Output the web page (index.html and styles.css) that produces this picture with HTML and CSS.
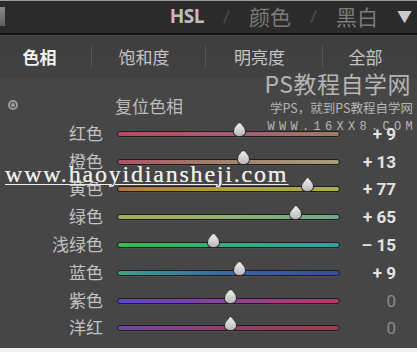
FILE: index.html
```html
<!DOCTYPE html>
<html>
	<head>
		<meta charset="UTF-8">
		<title>HSL</title>
		<link rel="stylesheet" href="styles.css">
	</head>
	<body>
		<div class="panel">
			<!--顶部标题栏-->
			<div class="topbar">
				<span class="grip"></span>
				<div class="modes">
					<span class="mode on">HSL</span>
					<span class="slash">/</span>
					<span class="mode">颜色</span>
					<span class="slash">/</span>
					<span class="mode">黑白</span>
					<span class="arrow">▼</span>
				</div>
			</div>
			<!--选项卡-->
			<div class="tabs">
				<div class="tab active">色相</div>
				<div class="tab">饱和度</div>
				<div class="tab">明亮度</div>
				<div class="tab">全部</div>
			</div>
			<div class="content">
				<div class="mark">
					<div class="mark-title">PS教程自学网</div>
					<div class="mark-sub">学PS，就到PS教程自学网</div>
					<div class="mark-url">WWW.16XX8.COM</div>
				</div>
				<div class="reset">
					<span class="target"></span>
					<span class="reset-text">复位色相</span>
				</div>
				<div class="rows">
					<div class="label">红色</div>
					<div class="track red"><span class="thumb" style="left:54.7%"></span></div>
					<div class="value">+ 9</div>

					<div class="label">橙色</div>
					<div class="track orange"><span class="thumb" style="left:56.5%"></span></div>
					<div class="value">+ 13</div>

					<div class="label">黄色</div>
					<div class="track yellow"><span class="thumb" style="left:85.6%"></span></div>
					<div class="value">+ 77</div>

					<div class="label">绿色</div>
					<div class="track green"><span class="thumb" style="left:80.3%"></span></div>
					<div class="value">+ 65</div>

					<div class="label">浅绿色</div>
					<div class="track aqua"><span class="thumb" style="left:43%"></span></div>
					<div class="value">– 15</div>

					<div class="label">蓝色</div>
					<div class="track blue"><span class="thumb" style="left:54.7%"></span></div>
					<div class="value">+ 9</div>

					<div class="label">紫色</div>
					<div class="track purple"><span class="thumb" style="left:50.7%"></span></div>
					<div class="value zero">0</div>

					<div class="label">洋红</div>
					<div class="track magenta"><span class="thumb" style="left:50.7%"></span></div>
					<div class="value zero">0</div>
				</div>
			</div>
			<div class="site">www.haoyidiansheji.com</div>
		</div>
	</body>
</html>
```

FILE: styles.css
```css
*{
	margin: 0px;
	padding: 0px;
	box-sizing: border-box;
}
html,body{
	background: #f1f1f1;
}
body{
	width: 417px;
	height: 352px;
	overflow: hidden;
	font-family: "Noto Sans CJK SC", "Noto Sans", sans-serif;
}
.panel{
	position: relative;
	width: 417px;
	height: 348px;
	background: #464646;
}
/*标题栏*/
.topbar{
	height: 35px;
	background: #2b2b2b;
	border-top: 1px solid #9a9a9a;
	border-bottom: 2px solid #141414;
	display: flex;
	align-items: center;
	justify-content: space-between;
}
.grip{
	width: 5px;
	height: 19px;
	margin-top: -2px;
	background: linear-gradient(#8a8a8a, #5e5e5e);
}
.modes{
	display: flex;
	align-items: center;
	gap: 19px;
	padding-right: 5px;
	margin-top: -3px;
	font-size: 21px;
	color: #7c7c7c;
}
.mode.on{
	color: #bdbdbd;
	font-family: "Open Sans", sans-serif;
	font-weight: bold;
	font-size: 19px;
	letter-spacing: -0.5px;
}
.slash{
	color: #4f4f4f;
	font-family: "Open Sans", sans-serif;
	font-size: 19px;
}
.arrow{
	color: #c9c9c9;
	font-size: 15px;
}
/*选项卡*/
.tabs{
	height: 43px;
	display: grid;
	grid-template-columns: 91px 114px 117px 1fr;
	align-items: center;
	background: linear-gradient(#3e3e3e, #424242);
	border-top: 1px solid #4a4a4a;
}
.tab{
	text-align: center;
	padding-right: 9px;
	font-size: 17px;
	line-height: 22px;
	color: #c4c4c4;
	border-left: 1px solid #555555;
}
.tab.active{
	border-left: none;
	font-weight: bold;
	font-size: 17px;
	color: #f2f2f2;
	padding-right: 12px;
}
/*内容*/
.content{
	position: relative;
	padding-top: 15px;
}
.mark{
	position: absolute;
	right: 4px;
	top: -6px;
	text-align: right;
	color: rgba(225,225,225,0.72);
	line-height: 1;
}
.mark-title{
	font-size: 23px;
	letter-spacing: 0.5px;
	margin-right: 2px;
}
.mark-sub{
	margin-top: 7px;
	font-size: 12.5px;
}
.mark-url{
	margin-top: 6px;
	font-family: "Liberation Mono", monospace;
	font-size: 12px;
	letter-spacing: 4.3px;
	margin-right: -4px;
}
.reset{
	height: 24px;
	display: flex;
	align-items: center;
	padding-left: 8px;
}
.target{
	width: 10px;
	height: 10px;
	border: 2px solid #9c9c9c;
	border-radius: 50%;
	position: relative;
}
.target::after{
	content: "";
	position: absolute;
	left: 1px;
	top: 1px;
	width: 4px;
	height: 4px;
	border-radius: 50%;
	background: #9c9c9c;
}
.reset-text{
	margin-left: 97px;
	font-size: 17px;
	color: #bcbcbc;
}
.rows{
	margin-top: 3px;
	display: grid;
	grid-template-columns: 103px 223px 42px;
	grid-auto-rows: 27.8px;
	column-gap: 14px;
	align-items: center;
}
.label{
	text-align: right;
	font-size: 17px;
	color: #c2c2c2;
	margin-top: -3px;
}
.value{
	text-align: right;
	font-family: Roboto, sans-serif;
	font-weight: bold;
	font-size: 17px;
	color: #e2e2e2;
}
.value.zero{
	color: #8c8c8c;
	font-weight: normal;
}
.track{
	position: relative;
	height: 6px;
	border-radius: 3px;
	border: 1px solid #1d1d1d;
	box-shadow: 0 1px 0 rgba(255,255,255,0.06);
}
.track.red{ background: linear-gradient(to right, #c2465f, #a56070 60%, #9c7c62); }
.track.orange{ background: linear-gradient(to right, #b24f66, #a47c6a 40%, #a6a078); }
.track.yellow{ background: linear-gradient(to right, #b5733e, #b0a040 50%, #a8ae52); }
.track.green{ background: linear-gradient(to right, #a7aa58, #8fb070 50%, #6fa88a); }
.track.aqua{ background: linear-gradient(to right, #3fb84a, #3aa882 55%, #3e9aa2); }
.track.blue{ background: linear-gradient(to right, #3aa58a, #3a6aa0 45%, #3d46a8); }
.track.purple{ background: linear-gradient(to right, #5a4bc0, #8a40a0 45%, #b23a66); }
.track.magenta{ background: linear-gradient(to right, #7048a8, #90406e 45%, #a03a4c); }
.thumb{
	position: absolute;
	top: -10px;
	width: 13px;
	height: 15px;
	margin-left: -6px;
	background: linear-gradient(#f0f0f0, #b8b8b8);
	border: 1px solid #2a2a2a;
	border-radius: 50% 50% 45% 45% / 65% 65% 35% 35%;
	clip-path: polygon(50% 0, 100% 55%, 100% 100%, 0 100%, 0 55%);
}
/*网址水印*/
.site{
	position: absolute;
	left: 5px;
	top: 161px;
	font-family: "Liberation Serif", serif;
	font-size: 24px;
	letter-spacing: 1.8px;
	color: #ececec;
	text-shadow: 0 0 0.4px #ececec;
	text-decoration: underline;
	text-decoration-thickness: 1px;
	text-underline-offset: 2px;
}
```
